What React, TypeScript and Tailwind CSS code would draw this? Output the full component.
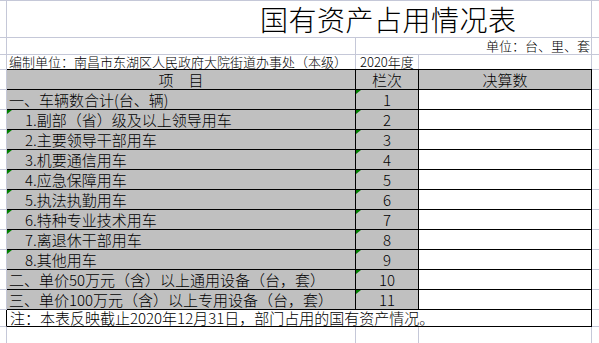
import React from 'react';

const rows: { label: string; n: string; tri: boolean; indent: boolean }[] = [
  { label: '一、车辆数合计(台、辆)', n: '1', tri: false, indent: false },
  { label: '1.副部（省）级及以上领导用车', n: '2', tri: true, indent: true },
  { label: '2.主要领导干部用车', n: '3', tri: true, indent: true },
  { label: '3.机要通信用车', n: '4', tri: true, indent: true },
  { label: '4.应急保障用车', n: '5', tri: true, indent: true },
  { label: '5.执法执勤用车', n: '6', tri: true, indent: true },
  { label: '6.特种专业技术用车', n: '7', tri: true, indent: true },
  { label: '7.离退休干部用车', n: '8', tri: true, indent: true },
  { label: '8.其他用车', n: '9', tri: true, indent: true },
  { label: '二、单价50万元（含）以上通用设备（台，套）', n: '10', tri: false, indent: false },
  { label: '三、单价100万元（含）以上专用设备（台，套）', n: '11', tri: false, indent: false },
];

function Tri() {
  return (
    <span className="absolute left-0 top-0 h-0 w-0 border-t-[4px] border-r-[5px] border-t-[#008000] border-r-transparent" />
  );
}

export default function App() {
  return (
    <div
      className="flex h-[343px] w-[599px] flex-col overflow-hidden bg-white font-light text-black"
      style={{ fontFamily: '"Noto Sans CJK SC", "Noto Sans", sans-serif' }}
    >
      {/* Title row */}
      <div className="flex h-[38px] shrink-0">
        <div className="w-[7px] shrink-0 border-y border-r border-[#c5c8d8]" />
        <div className="flex w-[585px] shrink-0 border-y border-r border-[#c5c8d8]">
          <div className="pl-[253px] text-[28px] leading-[36px] tracking-[0.5px]">国有资产占用情况表</div>
        </div>
        <div className="flex-1 border-y border-[#c5c8d8]" />
      </div>

      {/* Unit row */}
      <div className="flex h-[17px] shrink-0">
        <div className="w-[7px] shrink-0 border-b border-r border-[#c5c8d8]" />
        <div className="flex w-[585px] shrink-0 border-b border-r border-[#c5c8d8]">
          <div className="w-[349px] shrink-0 border-r border-[#c5c8d8]" />
          <div className="flex-1 pr-[1px] text-right text-[13px] leading-[16px]">单位：台、里、套</div>
        </div>
        <div className="flex-1 border-b border-[#c5c8d8]" />
      </div>

      {/* Compiler row */}
      <div className="flex h-[15px] shrink-0">
        <div className="w-[7px] shrink-0 border-b border-r border-[#c5c8d8]" />
        <div className="flex w-[585px] shrink-0 border-b border-black">
          <div className="w-[349px] shrink-0 whitespace-nowrap border-r border-[#c5c8d8] pl-[2px] text-[13px] leading-[14px]">
            编制单位：南昌市东湖区人民政府大院街道办事处（本级）
          </div>
          <div className="w-[63px] shrink-0 whitespace-nowrap border-r border-[#c5c8d8] pl-[4px] text-[13px] leading-[14px]">
            2020年度
          </div>
          <div className="w-[173px] shrink-0 border-r border-[#c5c8d8]" />
        </div>
        <div className="flex-1 border-b border-[#c5c8d8]" />
      </div>

      {/* Header row */}
      <div className="flex h-[20px] shrink-0">
        <div className="w-[7px] shrink-0 border-b border-r border-[#c5c8d8]" />
        <div className="flex w-[585px] shrink-0 border-b border-black text-[15px] leading-[19px]">
          <div className="w-[349px] shrink-0 border-r border-black bg-[#c0c0c0] text-center">项　目</div>
          <div className="w-[63px] shrink-0 border-r border-black bg-[#c0c0c0] text-center">栏次</div>
          <div className="w-[173px] shrink-0 border-r border-black bg-[#c0c0c0] text-center">决算数</div>
        </div>
        <div className="flex-1 border-b border-[#c5c8d8]" />
      </div>

      {/* Data rows */}
      {rows.map((r) => (
        <div key={r.n} className="flex h-[20px] shrink-0">
          <div className="w-[7px] shrink-0 border-b border-r border-[#c5c8d8]" />
          <div className="flex w-[585px] shrink-0 border-b border-black text-[15px] leading-[19px]">
            <div
              className={
                r.indent
                  ? 'relative w-[349px] shrink-0 whitespace-nowrap border-r border-black bg-[#c0c0c0] pl-[18px]'
                  : 'relative w-[349px] shrink-0 whitespace-nowrap border-r border-black bg-[#c0c0c0] pl-[2px]'
              }
            >
              {r.tri && <Tri />}
              {r.label}
            </div>
            <div className="relative w-[63px] shrink-0 border-r border-black bg-[#c0c0c0] text-center">
              <Tri />
              {r.n}
            </div>
            <div className="w-[173px] shrink-0 border-r border-black bg-white" />
          </div>
          <div className="flex-1 border-b border-[#c5c8d8]" />
        </div>
      ))}

      {/* Note row */}
      <div className="flex h-[17px] shrink-0">
        <div className="w-[7px] shrink-0 border-b border-r border-b-[#c5c8d8] border-r-black" />
        <div className="flex w-[585px] shrink-0 border-b border-r border-black">
          <div className="whitespace-nowrap pl-[3px] text-[15px] leading-[16px]">
            注：本表反映截止2020年12月31日，部门占用的国有资产情况。
          </div>
        </div>
        <div className="flex-1 border-b border-[#c5c8d8]" />
      </div>

      {/* Empty area below */}
      <div className="flex flex-1">
        <div className="w-[7px] shrink-0 border-r border-[#c5c8d8]" />
        <div className="flex w-[585px] shrink-0">
          <div className="w-[349px] shrink-0 border-r border-[#c5c8d8]" />
          <div className="w-[63px] shrink-0 border-r border-[#c5c8d8]" />
          <div className="w-[173px] shrink-0 border-r border-[#c5c8d8]" />
        </div>
        <div className="flex-1" />
      </div>
    </div>
  );
}
